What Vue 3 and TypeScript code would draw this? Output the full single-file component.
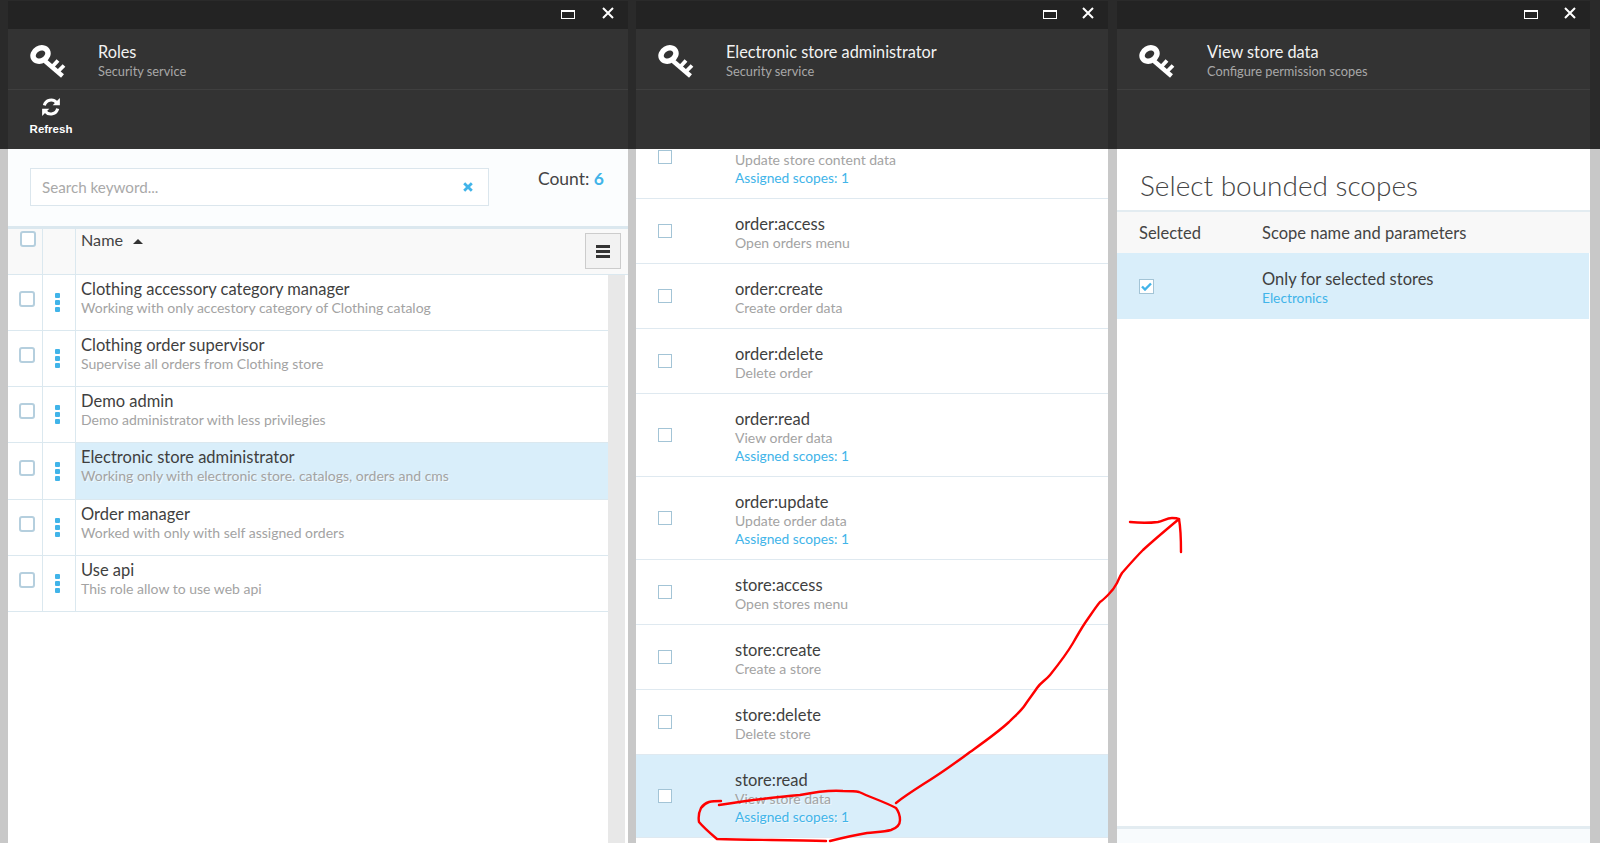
<script setup lang="ts">
interface Role {
  name: string
  description: string
  selected?: boolean
}

interface Permission {
  name: string
  description: string
  assigned?: number
  selected?: boolean
}

const roles: Role[] = [
  { name: 'Clothing accessory category manager', description: 'Working with only accestory category of Clothing catalog' },
  { name: 'Clothing order supervisor', description: 'Supervise all orders from Clothing store' },
  { name: 'Demo admin', description: 'Demo administrator with less privilegies' },
  { name: 'Electronic store administrator', description: 'Working only with electronic store. catalogs, orders and cms', selected: true },
  { name: 'Order manager', description: 'Worked with only with self assigned orders' },
  { name: 'Use api', description: 'This role allow to use web api' },
]

// first row is scrolled halfway under the header, its name isn't visible
const permissions: Permission[] = [
  { name: '', description: 'Update store content data', assigned: 1 },
  { name: 'order:access', description: 'Open orders menu' },
  { name: 'order:create', description: 'Create order data' },
  { name: 'order:delete', description: 'Delete order' },
  { name: 'order:read', description: 'View order data', assigned: 1 },
  { name: 'order:update', description: 'Update order data', assigned: 1 },
  { name: 'store:access', description: 'Open stores menu' },
  { name: 'store:create', description: 'Create a store' },
  { name: 'store:delete', description: 'Delete store' },
  { name: 'store:read', description: 'View store data', assigned: 1, selected: true },
]

const blades = [
  { title: 'Roles', subtitle: 'Security service', cls: 'roles' },
  { title: 'Electronic store administrator', subtitle: 'Security service', cls: 'perms' },
  { title: 'View store data', subtitle: 'Configure permission scopes', cls: 'scopes' },
]
</script>

<template>
  <div class="workspace">
    <section v-for="blade in blades" :key="blade.cls" :class="['blade', blade.cls]">
      <div class="title-bar">
        <span class="win-max"></span>
        <svg class="win-close" width="12" height="12" viewBox="0 0 12 12">
          <path d="M1 1l10 10M11 1L1 11" stroke="#fff" stroke-width="2" />
        </svg>
      </div>
      <header class="blade-head">
        <svg class="key" width="38" height="36" viewBox="0 0 38 36">
          <ellipse cx="10.500" cy="11.500" rx="7.800" ry="6.300" transform="rotate(-30 10.500 11.500)" fill="none" stroke="#fff" stroke-width="5.500" />
          <path d="M15 18l17.500 15" stroke="#fff" stroke-width="4.500" fill="none" />
          <path d="M22 24l6-6.500M27.500 29l6.500-6.500" stroke="#fff" stroke-width="3.800" fill="none" />
        </svg>
        <div class="head-text">
          <div class="head-title">{{ blade.title }}</div>
          <div class="head-sub">{{ blade.subtitle }}</div>
        </div>
      </header>
      <div class="toolbar">
        <div v-if="blade.cls === 'roles'" class="tool">
          <svg width="20" height="20" viewBox="0 0 18 18">
            <path d="M3 7.500A6.300 6.300 0 0 1 14 5" fill="none" stroke="#fff" stroke-width="2.800" />
            <path d="M17 1v6.500h-6.500z" fill="#fff" />
            <path d="M15 10.500A6.300 6.300 0 0 1 4 13" fill="none" stroke="#fff" stroke-width="2.800" />
            <path d="M1 17v-6.500h6.500z" fill="#fff" />
          </svg>
          <span>Refresh</span>
        </div>
      </div>

      <div v-if="blade.cls === 'roles'" class="content roles-content">
        <div class="search-row">
          <div class="search">
            <span class="placeholder">Search keyword...</span>
            <svg width="10" height="10" viewBox="0 0 10 10">
              <path d="M1.200 1.200l7.600 7.600M8.800 1.200L1.200 8.800" stroke="#41b4e9" stroke-width="2.800" />
            </svg>
          </div>
          <div class="count">Count: <b>6</b></div>
        </div>
        <div class="grid-head">
          <div class="cell-check"><span class="check round head-check"></span></div>
          <div class="cell-menu"></div>
          <div class="cell-name">Name <i class="sort"></i></div>
          <button class="col-btn"><span></span><span></span><span></span></button>
        </div>
        <div class="grid-body">
          <div class="grid-rows">
            <div v-for="role in roles" :key="role.name" class="grid-row">
              <div class="cell-check"><span class="check round"></span></div>
              <div class="cell-menu"><span class="dots"><i></i><i></i><i></i></span></div>
              <div :class="['cell-text', { selected: role.selected }]">
                <div class="row-title">{{ role.name }}</div>
                <div class="row-sub">{{ role.description }}</div>
              </div>
            </div>
          </div>
          <div class="scroll-track"></div>
        </div>
      </div>

      <div v-else-if="blade.cls === 'perms'" class="content perms-content">
        <div class="perm-list">
          <div
            v-for="perm in permissions"
            :key="perm.description"
            :class="['perm-row', { selected: perm.selected, tall: perm.assigned }]"
          >
            <span class="check"></span>
            <div class="perm-text">
              <div class="row-title">{{ perm.name }}</div>
              <div class="row-sub">{{ perm.description }}</div>
              <div v-if="perm.assigned" class="row-link">Assigned scopes: {{ perm.assigned }}</div>
            </div>
          </div>
        </div>
      </div>

      <div v-else class="content scopes-content">
        <h2>Select bounded scopes</h2>
        <div class="scope-head">
          <div class="scope-col">Selected</div>
          <div>Scope name and parameters</div>
        </div>
        <div class="scope-row">
          <div class="scope-col">
            <span class="check checked">
              <svg width="11" height="9" viewBox="0 0 11 9">
                <path d="M1 4.500l3 3 6-6" fill="none" stroke="#41b4e9" stroke-width="2.400" />
              </svg>
            </span>
          </div>
          <div class="scope-text">
            <div class="row-title">Only for selected stores</div>
            <div class="row-link">Electronics</div>
          </div>
        </div>
        <div class="scope-space"></div>
        <div class="scope-foot"></div>
      </div>
    </section>

    <svg class="scribble" width="1600" height="843" viewBox="0 0 1600 843">
      <g fill="none" stroke="#f00" stroke-width="2.400" stroke-linecap="round" stroke-linejoin="round">
        <path d="M719 805C745 801 775 797 800 795C815 792 830 790 843 791C850 791 855 791 859 792C872 798 885 802 896 808C899 812 900 816 900 820C900 825 897 828 891 830C884 832 875 832 867 833C855 835 842 838 830 841" />
        <path d="M826 841C790 840 750 840 717 839C710 833 704 828 699 822C698 816 699 812 701 808C703 805 706 803 709 802C713 801 717 801 721 801" />
        <path d="M896 803C910 792 926 783 942 772C952 765 961 759 970 752C984 742 997 733 1009 722C1016 715 1021 711 1025 705C1029 699 1033 694 1037 688C1041 682 1046 680 1050 675C1058 665 1066 655 1073 643C1077 636 1081 629 1085 623C1090 616 1095 608 1100 602C1103 600 1106 597 1108 595C1112 591 1115 587 1117 583C1119 579 1120 576 1122 573C1129 565 1136 557 1143 550C1155 539 1167 529 1179 519" />
        <path d="M1130 522C1139 523 1150 523 1158 522C1163 521 1167 518 1172 518C1175 518 1177 518 1179 519C1181 530 1181 541 1181 552" />
      </g>
    </svg>
  </div>
</template>

<style>
html,
body {
  margin: 0;
  padding: 0;
  background: #fff;
}
</style>

<style scoped>
.workspace {
  position: relative;
  display: flex;
  width: 1600px;
  height: 843px;
  overflow: hidden;
  box-sizing: border-box;
  padding: 1px 1px 0 8px;
  gap: 8px;
  background: linear-gradient(#2a2a2a 149px, #c8c8c8 149px);
  font-family: Lato, "Noto Sans", sans-serif;
  color: #3f3f3f;
}

.blade {
  display: flex;
  flex-direction: column;
  flex: none;
  min-height: 0;
}

.blade.roles {
  width: 620px;
}

.blade.perms {
  width: 472px;
}

.blade.scopes {
  width: 473px;
  margin-left: 1px;
}

.title-bar {
  flex: none;
  height: 28px;
  background: #232323;
  position: relative;
}

.win-max {
  position: absolute;
  top: 9px;
  right: 52px;
  width: 12px;
  height: 6px;
  border: 1px solid #fff;
  border-top-width: 2px;
  box-sizing: content-box;
}

.roles .win-max {
  right: 53px;
}

.perms .win-max {
  right: 51px;
}

.win-close {
  position: absolute;
  top: 6px;
  right: 14px;
}

.blade-head {
  flex: none;
  height: 61px;
  box-sizing: border-box;
  display: flex;
  align-items: flex-start;
  padding: 14px 0 0 22px;
  background: #333;
  border-bottom: 1px solid #3f3f3f;
}

.key {
  flex: none;
}

.head-text {
  margin-left: 30px;
  margin-top: -1px;
}

.head-title {
  font-size: 16.3px;
  line-height: 20px;
  color: #f2f2f2;
}

.head-sub {
  font-size: 12.8px;
  line-height: 18px;
  color: #a8a8a8;
}

.toolbar {
  flex: none;
  height: 59px;
  background: #333;
}

.tool {
  width: 86px;
  padding-top: 7px;
  display: flex;
  flex-direction: column;
  align-items: center;
  gap: 3px;
  color: #fff;
  font-family: "Liberation Sans", sans-serif;
  font-size: 11.5px;
  font-weight: 700;
  line-height: 18px;
}

.content {
  flex: 1;
  min-height: 0;
  display: flex;
  flex-direction: column;
  overflow: hidden;
  background: #fff;
}

.roles-content {
  background: #fbfdfe;
}

.search-row {
  flex: none;
  height: 77px;
  display: flex;
  align-items: flex-start;
  padding: 19px 24px 0 22px;
  box-sizing: border-box;
}

.search {
  width: 459px;
  height: 38px;
  box-sizing: border-box;
  border: 1px solid #dbe6ed;
  background: #fff;
  display: flex;
  align-items: center;
  justify-content: space-between;
  padding: 0 15px 0 11px;
}

.placeholder {
  font-size: 15.2px;
  color: #a9a9a9;
}

.count {
  margin-left: auto;
  font-size: 17.5px;
  line-height: 22px;
  color: #444;
}

.count b {
  font-weight: 700;
  color: #41b4e9;
}

.grid-head {
  flex: none;
  position: relative;
  height: 45px;
  display: flex;
  border-top: 3px solid #dbe8ef;
  border-bottom: 1px solid #dbe8ef;
  background: #f9f9f9;
  box-sizing: content-box;
}

.cell-check {
  flex: none;
  width: 35px;
  box-sizing: border-box;
  padding: 0 0 7px 3px;
  border-right: 1px solid #dbe8ef;
  display: flex;
  align-items: center;
  justify-content: center;
}

.cell-menu {
  flex: none;
  width: 33px;
  box-sizing: border-box;
  padding-right: 4px;
  border-right: 1px solid #dbe8ef;
  display: flex;
  align-items: center;
  justify-content: center;
}

.grid-head .cell-check {
  align-items: flex-start;
  padding: 0 0 0 6px;
}

.head-check {
  margin-top: 2px;
}

.cell-name {
  padding: 1px 0 0 5px;
  font-size: 16.2px;
  line-height: 20px;
  color: #444;
}

.sort {
  display: inline-block;
  width: 0;
  height: 0;
  margin: 0 0 2px 6px;
  border-left: 5px solid transparent;
  border-right: 5px solid transparent;
  border-bottom: 5px solid #333;
}

.col-btn {
  position: absolute;
  top: 4px;
  right: 7px;
  width: 36px;
  height: 36px;
  box-sizing: border-box;
  padding: 0;
  background: #f2f2f2;
  border: 1px solid #ccc;
  display: flex;
  flex-direction: column;
  align-items: center;
  justify-content: center;
  gap: 2px;
}

.col-btn span {
  display: block;
  width: 14px;
  height: 3px;
  background: #333;
}

.grid-body {
  flex: 1;
  min-height: 0;
  display: flex;
  background: #fff;
}

.grid-rows {
  flex: none;
  width: 600px;
}

.scroll-track {
  flex: none;
  width: 17px;
  background: #e8e8e8;
}

.grid-row {
  height: 56.17px;
  box-sizing: border-box;
  display: flex;
  border-bottom: 1px solid #dbe8ef;
}

.cell-text {
  flex: 1;
  padding: 4px 0 0 5px;
  background: #fff;
}

.cell-text.selected {
  background: #d9eefa;
}

.row-title {
  min-height: 20px;
  font-size: 16.5px;
  line-height: 20px;
  color: #3f3f3f;
}

.row-sub {
  font-size: 14px;
  line-height: 18px;
  color: #a3a3a3;
}

.row-link {
  font-size: 13.75px;
  line-height: 18px;
  color: #41b4e9;
}

.selected .row-sub,
.selected .row-link {
  text-shadow: 1px 1px 0 rgba(255, 255, 255, 0.6);
}

.check {
  display: block;
  flex: none;
  width: 14px;
  height: 14px;
  box-sizing: border-box;
  border: 1px solid #a3c4d6;
  background: #fff;
}

.check.round {
  width: 16px;
  height: 16px;
  border: 2px solid #b5cfde;
  border-radius: 3px;
}

.dots {
  display: flex;
  flex-direction: column;
  gap: 2px;
}

.dots i {
  display: block;
  width: 5px;
  height: 5px;
  border-radius: 1px;
  background: #41b4e9;
}

.perm-list {
  margin-top: -33px;
}

.perm-row {
  height: 65px;
  box-sizing: border-box;
  display: flex;
  align-items: center;
  padding-left: 22px;
  border-bottom: 1px solid #dfe9f0;
}

.perm-row.tall {
  height: 83px;
}

.perm-row.selected {
  background: #d9eefa;
}

.perm-text {
  margin-left: 63px;
  padding-top: 3px;
}

.scopes-content h2 {
  flex: none;
  height: 61px;
  margin: 0;
  box-sizing: border-box;
  padding: 17px 0 0 23px;
  font-size: 28px;
  line-height: 38px;
  font-weight: 300;
  color: #444;
}

.scope-head {
  flex: none;
  height: 43px;
  box-sizing: border-box;
  display: flex;
  align-items: center;
  padding-left: 22px;
  background: #f8f8f8;
  border-top: 2px solid #e3ecf1;
  font-size: 16.5px;
  color: #444;
}

.scope-col {
  flex: none;
  width: 123px;
}

.scope-row {
  flex: none;
  height: 66px;
  box-sizing: border-box;
  display: flex;
  align-items: center;
  padding-left: 22px;
  background: #d9eefa;
  margin-right: 1px;
}

.scope-text {
  padding-top: 3px;
}

.check.checked {
  width: 15px;
  height: 15px;
  display: flex;
  align-items: center;
  justify-content: center;
}

.scope-space {
  flex: 1;
}

.scope-foot {
  flex: none;
  height: 17px;
  box-sizing: border-box;
  border-top: 3px solid #e3ecf1;
  background: #f8fbfd;
}

.scribble {
  position: absolute;
  left: 0;
  top: 0;
  pointer-events: none;
}
</style>
